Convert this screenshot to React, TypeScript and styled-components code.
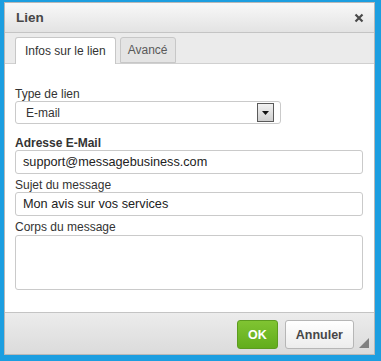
import styled, { createGlobalStyle } from 'styled-components';

const GlobalStyle = createGlobalStyle`
  html, body {
    margin: 0;
    padding: 0;
    background: #1c9ee0;
  }
  * {
    box-sizing: border-box;
  }
`;

const Frame = styled.div`
  width: 381px;
  height: 361px;
  padding: 2px 6px 6px 4px;
  background: #1c9ee0;
`;

const Dialog = styled.div`
  width: 100%;
  height: 100%;
  display: flex;
  flex-direction: column;
  background: #fff;
  border: 1px solid #b8b8b8;
  font-family: 'Liberation Sans', Arial, sans-serif;
  font-size: 12px;
  color: #333;
`;

const TitleBar = styled.div`
  height: 30px;
  flex: none;
  display: flex;
  align-items: center;
  justify-content: space-between;
  padding: 0 9px 0 11px;
  background: linear-gradient(to bottom, #f8f8f8, #e3e3e3);
  border-bottom: 1px solid #c4c4c4;
`;

const Title = styled.span`
  font-size: 13.5px;
  font-weight: bold;
  color: #474747;
`;

const CloseButton = styled.span`
  display: flex;
  width: 12px;
  height: 12px;
  align-items: center;
  justify-content: center;
`;

const TabBar = styled.div`
  height: 31px;
  flex: none;
  display: flex;
  align-items: flex-end;
  gap: 4px;
  padding: 0 0 0 10px;
  background: #ebebeb;
  border-bottom: 1px solid #d0d0d0;
`;

const Tab = styled.div<{ $active?: boolean }>`
  height: ${({ $active }) => ($active ? '27px' : '26px')};
  margin-bottom: ${({ $active }) => ($active ? '-1px' : '0')};
  display: flex;
  align-items: center;
  padding: 0 ${({ $active }) => ($active ? '9px' : '7px')};
  border: 1px solid #c7c7c7;
  border-bottom: ${({ $active }) => ($active ? 'none' : '1px solid #c7c7c7')};
  border-radius: 3px 3px 0 0;
  background: ${({ $active }) => ($active ? '#fff' : '#e4e4e4')};
  color: ${({ $active }) => ($active ? '#333' : '#595959')};
`;

const Body = styled.div`
  flex: 1;
  display: flex;
  flex-direction: column;
  padding: 23px 11px 0 10px;
`;

const Label = styled.div<{ $bold?: boolean; $gap?: number }>`
  line-height: 14px;
  height: 14px;
  margin-top: ${({ $gap }) => $gap ?? 0}px;
  font-weight: ${({ $bold }) => ($bold ? 'bold' : 'normal')};
  color: #333;
`;

const SelectBox = styled.div`
  width: 266px;
  height: 23px;
  display: flex;
  align-items: center;
  justify-content: space-between;
  padding: 0 6px 0 10px;
  border: 1px solid #cacaca;
  border-radius: 3px;
  background: #fff;
`;

const DropButton = styled.div`
  width: 17px;
  height: 19px;
  display: flex;
  align-items: center;
  justify-content: center;
  border: 1px solid #5a5a5a;
  background: linear-gradient(to bottom, #f2f2f2, #cfcfcf);
`;

const TextInput = styled.div`
  height: 24px;
  display: flex;
  align-items: center;
  padding: 0 7px;
  border: 1px solid #cacaca;
  border-radius: 3px;
  background: #fff;
  color: #222;
  font-size: 12.7px;
`;

const TextArea = styled.div`
  height: 55px;
  margin-top: 1px;
  border: 1px solid #cacaca;
  border-radius: 3px;
  background: #fff;
`;

const Footer = styled.div`
  height: 42px;
  flex: none;
  display: flex;
  align-items: center;
  justify-content: flex-end;
  gap: 7px;
  padding: 2px 20px 0 0;
  background: linear-gradient(to bottom, #ececec, #dbdbdb);
  border-top: 1px solid #c4c4c4;
  position: relative;
`;

const Button = styled.div<{ $primary?: boolean }>`
  height: 29px;
  display: flex;
  align-items: center;
  justify-content: center;
  padding: 0 ${({ $primary }) => ($primary ? '10px' : '10px')};
  border-radius: 3px;
  font-weight: bold;
  font-size: 12.5px;
  border: 1px solid ${({ $primary }) => ($primary ? '#5c9c1f' : '#b6b6b6')};
  color: ${({ $primary }) => ($primary ? '#fff' : '#474747')};
  background: ${({ $primary }) =>
    $primary
      ? 'linear-gradient(to bottom, #80c432, #62ad1d)'
      : 'linear-gradient(to bottom, #ffffff, #ececec)'};
`;

const Grip = styled.svg`
  position: absolute;
  right: 5px;
  bottom: 6px;
`;

export default function App() {
  return (
    <>
      <GlobalStyle />
      <Frame>
        <Dialog>
          <TitleBar>
            <Title>Lien</Title>
            <CloseButton>
              <svg width="10" height="10" viewBox="0 0 10 10">
                <path d="M1.5 1.5 L8.5 8.5 M8.5 1.5 L1.5 8.5" stroke="#4a4a4a" strokeWidth="2.2" />
              </svg>
            </CloseButton>
          </TitleBar>
          <TabBar>
            <Tab $active>Infos sur le lien</Tab>
            <Tab>Avancé</Tab>
          </TabBar>
          <Body>
            <Label>Type de lien</Label>
            <SelectBox>
              <span>E-mail</span>
              <DropButton>
                <svg width="7" height="4" viewBox="0 0 7 4">
                  <path d="M0 0 H7 L3.5 4 Z" fill="#111" />
                </svg>
              </DropButton>
            </SelectBox>
            <Label $bold $gap={12}>Adresse E-Mail</Label>
            <TextInput>support@messagebusiness.com</TextInput>
            <Label $gap={4}>Sujet du message</Label>
            <TextInput>Mon avis sur vos services</TextInput>
            <Label $gap={4}>Corps du message</Label>
            <TextArea />
          </Body>
          <Footer>
            <Button $primary>OK</Button>
            <Button>Annuler</Button>
            <Grip width="10" height="10" viewBox="0 0 10 10">
              <path d="M10 0 V10 H0 Z" fill="#808080" />
            </Grip>
          </Footer>
        </Dialog>
      </Frame>
    </>
  );
}
